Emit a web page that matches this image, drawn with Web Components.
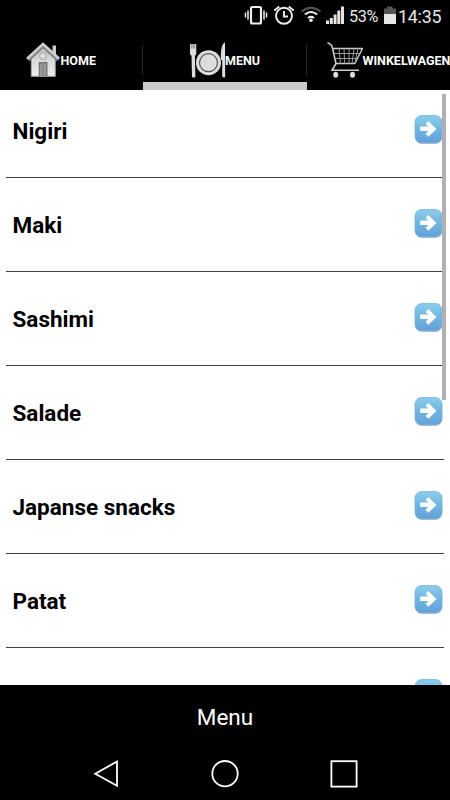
<!DOCTYPE html>
<html lang="nl"><head><meta charset="utf-8"><title>Menu</title>
<style>html,body{margin:0;background:#000;overflow:hidden}body{font-family:Roboto,"Open Sans",sans-serif}</style></head>
<body><sushi-app></sushi-app>
<script>
const define=(name,html)=>customElements.define(name,class extends HTMLElement{
  constructor(){super();this.attachShadow({mode:'open'}).innerHTML='<style>*{box-sizing:border-box}svg{display:block;flex:none}</style>'+html;}
});

define('status-bar',`<style>:host{display:flex;align-items:center;height:32px;background:#000;color:#e6e6e6;padding-left:244px;white-space:nowrap}
.p{font-size:16.2px;width:32px;margin-left:5px;letter-spacing:-.35px}.t{font-size:17.8px;letter-spacing:-.2px;margin-left:2px}</style>
<svg width="24" height="32" viewBox="0 0 24 32" fill="none" stroke="#eee"><rect x="7" y="7" width="10" height="16.5" rx="1.5" stroke-width="2.2"/><path d="M1.5 12.5v5M4 10.5v9M20 10.5v9M22.5 12.5v5" stroke-width="1.5"/></svg>
<svg width="22" height="32" viewBox="0 0 22 32" style="margin-left:5px" fill="none" stroke="#eee" stroke-width="1.9"><circle cx="11" cy="15.8" r="8"/><path d="M11 11v5.5h4"/><path d="M1.3 10.5l5-4M15.7 6.5l5 4"/></svg>
<svg width="22" height="32" viewBox="0 0 22 32" style="margin-left:5px" fill="none" stroke-width="2"><path d="M1.5 11.5Q11 4 20.5 11.5" stroke="#555"/><path d="M4.8 14.5Q11 9.5 17.2 14.5M8 18Q11 15.7 14 18" stroke="#eee"/><circle cx="11" cy="20.3" r="1.7" fill="#eee" stroke="none"/></svg>
<svg width="18" height="32" viewBox="0 0 18 32" style="margin-left:4px" fill="#e4e4e0"><path d="M0 20.5h3V24H0zM3.8 18h3v6h-3zM7.6 14.5h3V24h-3zM11.3 10.5h3V24h-3zM15 6.5h3V24h-3z"/></svg>
<span class="p">53%</span>
<svg width="12" height="32" viewBox="0 0 12 32" style="margin-left:3px"><path d="M0 8.5h3V6.5h5.5v2H12V15H0z" fill="#555"/><path d="M0 14h12v10H0z" fill="#e6e6e6"/></svg>
<span class="t">14:35</span>`);

define('nav-tab',`<style>:host{display:flex;flex:none;position:relative;height:58px;width:164px;color:#fff;padding:10px 0 0 var(--lead,46px);align-items:flex-start;border-bottom:0 solid #cbcbcb;font:700 12.5px Roboto,sans-serif;white-space:nowrap}
:host([first]){width:143px}
:host([selected]){border-bottom-width:8px}
:host(:not([last]))::after{content:"";position:absolute;right:0;top:3px;width:1px;height:30px;background:#292929;margin-top:10px}
span{line-height:15px;padding-top:11px}</style><slot name="icon"></slot><span><slot></slot></span>`);

define('house-icon',`<style>:host{display:block;width:35px;height:36px}</style><svg width="35" height="36" viewBox="0 0 35 36">
<defs><linearGradient id="h" x2="0" y2="1"><stop stop-color="#c4c4c4"/><stop offset="1" stop-color="#eee"/></linearGradient></defs>
<path d="M26.5 3.5h3.5v11h-3.5z" fill="#ccc"/><path d="M5.3 16L17 5l12.2 11v18.3H5.3z" fill="url(#h)" stroke="#aaa"/><path d="M2.5 18.3L17 4.8l14.8 13.5" fill="none" stroke="#858585" stroke-width="2.6"/><path d="M1 16.8L17 2l16.2 14.8" fill="none" stroke="#d0d0d0" stroke-width="2.6"/><circle cx="17" cy="14" r="3.3" fill="#ddd" stroke="#aaa" stroke-width="1.1"/><path d="M12.7 20h8.8v15h-8.8z" fill="#777"/><path d="M14 21.5h6.2V35H14z" fill="#999"/><path d="M17 22v12" stroke="#808080"/></svg>`);

define('plate-icon',`<style>:host{display:block;width:35px;height:37px}</style><svg width="36" height="37" viewBox="0 0 36 37">
<path d="M0 2h6.3v9q0 2-1.4 2.7L5.4 35q-1.9 1.2-3.4 0L1.5 13.7Q0 13 0 11z" fill="#ddd"/><path d="M1.7 2v4.5M3.2 2v4.5M4.7 2v4.5" stroke="#555" stroke-width=".6"/><circle cx="18.5" cy="20.7" r="12.5" fill="#ddd"/><circle cx="18.5" cy="20.7" r="9" fill="#ddd" stroke="#555" stroke-width="1.2"/><path d="M35 .3q-4 2-4.2 13.7v3.5l1.4 1V34.5q1.5 1.8 3 .5z" fill="#ddd"/></svg>`);

define('cart-icon',`<style>:host{display:block;width:35.5px;height:37px}</style><svg width="36" height="37" viewBox="0 0 36 37" fill="none" stroke="#ccc">
<path d="M.5.8Q4.8 2.3 5.5 6L9 21.5 5 28.3h27" stroke-width="1.6"/><path d="M6 6.5h29.5L27.8 21.5H9" stroke-width="1.4"/><path d="M7 11.5h26M8 16.5h22M12 6.5l1.5 15M17 6.5l.7 15M22 6.5v15M27 6.5l-2 15M31 6.5l-3 14" stroke="#999"/><ellipse cx="8.7" cy="32.8" rx="2.5" ry="3" fill="#ddd" stroke="none"/><ellipse cx="25.5" cy="32.8" rx="2.5" ry="3" fill="#ddd" stroke="none"/></svg>`);

define('arrow-badge',`<style>:host{display:block;width:29px;height:30px;flex:none}</style><svg width="29" height="30" viewBox="0 0 29 30">
<defs><linearGradient id="b" x2="0" y2="1"><stop stop-color="#8ccde9"/><stop offset=".5" stop-color="#70b5e2"/><stop offset="1" stop-color="#62a1d8"/></linearGradient></defs>
<rect x="1" y="1.8" width="27.2" height="27.2" rx="7" fill="#b4c0ca"/><rect x="1" y=".6" width="27" height="27.2" rx="6.5" fill="url(#b)" stroke="#73b3dc" stroke-width=".8"/><path d="M6.2 11.5v4.6h8.2l-2.8 2.7 2.7 3 8.2-7.9-8.2-7.9-2.7 2.9 2.8 2.6z" fill="#fff"/></svg>`);

define('menu-row',`<style>:host{display:flex;flex:none;justify-content:space-between;height:94px;border-bottom:1px solid #414141;margin:0 6px;padding:30px 1px 0 6.5px;color:#000}
span{font-weight:700;font-size:22.5px;line-height:26px;padding-top:4px;white-space:nowrap}arrow-badge{margin-top:.7px}</style><span><slot></slot></span><arrow-badge></arrow-badge>`);

define('menu-list',`<style>:host{display:flex;flex-direction:column;height:595px;background:#fff;overflow:hidden;position:relative}
::slotted(menu-row:first-child){margin-top:-6px}i{position:absolute;right:4px;top:4px;width:4px;height:306px;background:#b0b0b0}</style><slot></slot><i></i>`);

define('page-title',`<style>:host{display:block;height:63px;color:#fff;text-align:center;font-size:22.5px;line-height:64px}</style><slot></slot>`);
define('nav-keys',`<style>:host{display:flex;height:52px;padding:0 91px;justify-content:space-between;align-items:center;background:#000}</style>
<svg width="30" height="52" viewBox="0 0 30 52" fill="none" stroke="#fff" stroke-width="1.8"><path d="M26 13.5v24.2L4.3 25.7z"/></svg>
<svg width="30" height="52" viewBox="0 0 30 52" fill="none" stroke="#fff" stroke-width="1.8"><circle cx="15" cy="25.7" r="12.7"/></svg>
<svg width="30" height="52" viewBox="0 0 30 52" fill="none" stroke="#fff" stroke-width="1.8"><rect x="2.4" y="13.2" width="25.2" height="25.4"/></svg>`);

define('sushi-app',`<style>:host{display:flex;flex-direction:column;width:450px;height:800px;background:#000;overflow:hidden}nav{display:flex;width:450px;height:58px;overflow:hidden}</style>
<status-bar></status-bar><nav>
<nav-tab first style="--lead:25.5px"><house-icon slot="icon"></house-icon>HOME</nav-tab>
<nav-tab selected style="--lead:47px"><plate-icon slot="icon"></plate-icon>MENU</nav-tab>
<nav-tab last style="--lead:20px"><cart-icon slot="icon"></cart-icon>WINKELWAGEN</nav-tab></nav>
<menu-list><menu-row>Nigiri</menu-row><menu-row>Maki</menu-row><menu-row>Sashimi</menu-row><menu-row>Salade</menu-row><menu-row>Japanse snacks</menu-row><menu-row>Patat</menu-row><menu-row></menu-row></menu-list>
<page-title>Menu</page-title><nav-keys></nav-keys>`);
</script></body></html>
